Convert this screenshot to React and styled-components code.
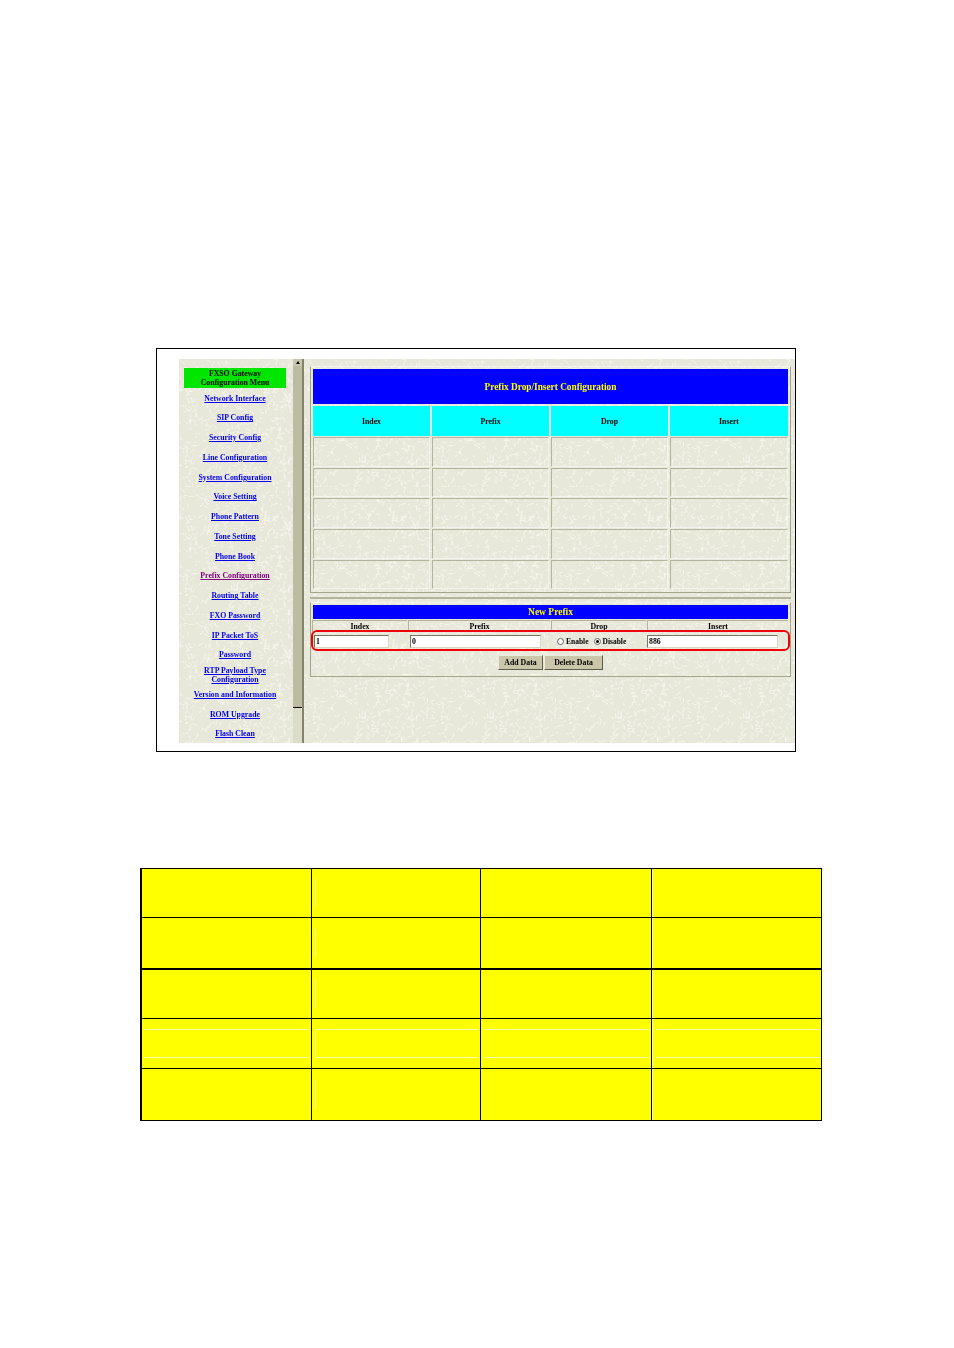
import styled, { createGlobalStyle } from "styled-components"

// little pale strokes like the old "white chocolate" tiled web background
const makeTexture = () => {
    let seed = 17
    const rnd = () => {
        seed = (seed * 16807) % 2147483647
        return seed / 2147483647
    }
    let lines = ""
    for (let i = 0; i < 640; i++) {
        const x = rnd() * 128
        const y = rnd() * 128
        const a = rnd() * Math.PI * 2
        const len = 2 + rnd() * 4
        lines += `<line x1='${x.toFixed(1)}' y1='${y.toFixed(1)}' x2='${(x + Math.cos(a) * len).toFixed(1)}' y2='${(y + Math.sin(a) * len).toFixed(1)}' stroke='#f6f6ed' stroke-width='0.9'/>`
    }
    const svg = `<svg xmlns='http://www.w3.org/2000/svg' width='128' height='128'>${lines}</svg>`
    return `url("data:image/svg+xml,${encodeURIComponent(svg)}")`
}

const texture = makeTexture()

const GlobalStyle = createGlobalStyle`
    html, body {
        margin: 0;
        background: #fff;
    }
    * {
        box-sizing: border-box;
    }
`

const Page = styled.div`
    width: 954px;
    height: 1348px;
    padding-top: 348px;
    font-family: "Liberation Serif", "Times New Roman", serif;
    font-size: 7.8px;
    font-weight: bold;
    color: #000;
`

const Frame = styled.div`
    width: 640px;
    height: 404px;
    margin-left: 156px;
    padding: 10px 0 8px 22px;
    border: 1px solid #000;
`

const Shot = styled.div`
    display: flex;
    width: 616px;
    height: 384px;
    background-color: #e7e7da;
    background-image: ${texture};
    filter: blur(0.25px);
`

const Sidebar = styled.nav`
    flex: none;
    width: 114px;
    padding: 9px 7px 0 5px;
`

const MenuTitle = styled.div`
    height: 20px;
    padding-top: 1px;
    background: #00e600;
    text-align: center;
    line-height: 9px;
`

const MenuList = styled.div`
    display: grid;
    grid-auto-rows: 19.76px;
    margin-top: 0.3px;
`

const MenuLink = styled.a`
    align-self: center;
    text-align: center;
    line-height: 9px;
    text-decoration: underline;
    color: ${props => (props.$visited ? "#800080" : "#0000ee")};
`

const Scrollbar = styled.div`
    flex: none;
    display: flex;
    flex-direction: column;
    width: 11px;
    background: #dcdccb;
    border-right: 2px solid #85836b;
`

const ScrollArrow = styled.div`
    display: flex;
    align-items: center;
    justify-content: center;
    height: 7px;
    background: #c9c7ae;
    &::before {
        content: "";
        border: 2px solid transparent;
        border-top: 0;
        border-bottom: 3px solid #000;
    }
`

const ScrollThumb = styled.div`
    height: 342px;
    background: #bdbba2;
    border-bottom: 1px solid #000;
`

const Content = styled.main`
    flex: 1;
    min-width: 0;
    padding: 7px 4px 0 6px;
`

const Panel = styled.section`
    display: flex;
    flex-direction: column;
    padding: 2px;
    height: ${props => props.$height}px;
    border: 1px solid;
    border-color: #f4f4ec #a5a48c #a5a48c #a5a48c;
`

const Banner = styled.h1`
    margin: 0;
    display: flex;
    align-items: center;
    justify-content: center;
    height: ${props => props.$height}px;
    background: #0000ff;
    color: #ffff00;
    font-size: ${props => props.$size}px;
    font-weight: bold;
`

const PrefixGrid = styled.div`
    display: grid;
    grid-template-columns: 117px 117px 117px 118px;
    grid-template-rows: 30px repeat(5, 29.7px);
    column-gap: 2px;
    row-gap: 1px;
    margin-top: 2px;
`

const ColumnHead = styled.div`
    display: flex;
    align-items: center;
    justify-content: center;
    background: #00ffff;
`

const EmptyCell = styled.div`
    border: 1px solid;
    border-color: #b4b39c #f4f4ec #f4f4ec #b4b39c;
`

const Divider = styled.hr`
    height: 2px;
    margin: 4px 0 3px;
    border: 0;
    background: #b4b39c;
`

const FieldHeads = styled.div`
    display: grid;
    grid-template-columns: 95px 142px 95px 1fr;
    gap: 1px;
    height: 10px;
    margin: 1px 0 0 -1px;
`

const FieldHead = styled.div`
    text-align: center;
    line-height: 11px;
    border-top: 1px solid #b4b39c;
    border-left: 1px solid #b4b39c;
`

const FieldRow = styled.div`
    display: grid;
    grid-template-columns: 96px 141px 96px 1fr;
    align-items: center;
    height: 21px;
    margin: 0 -2px;
    padding-top: 2px;
    border: 2px solid #f00000;
    border-radius: 6px;
`

const TextBox = styled.div`
    width: ${props => props.$width}px;
    height: 13px;
    margin-left: ${props => props.$left}px;
    padding-left: 1px;
    background: #fff;
    line-height: 11px;
    border: 1px solid;
    border-color: #77765f #d8d7c3 #d8d7c3 #77765f;
`

const RadioGroup = styled.div`
    display: flex;
    align-items: center;
    padding-left: 4px;
    font-size: 7.5px;
`

const Radio = styled.span`
    display: flex;
    align-items: center;
    justify-content: center;
    width: 7px;
    height: 7px;
    margin: 0 2px 0 ${props => props.$gap}px;
    background: #fff;
    border: 1px solid #6a695c;
    border-radius: 50%;
    &::after {
        content: "";
        display: ${props => (props.$on ? "block" : "none")};
        width: 3px;
        height: 3px;
        border-radius: 50%;
        background: #000;
    }
`

const Buttons = styled.div`
    display: flex;
    justify-content: center;
    gap: 1px;
    margin-top: 4px;
`

const Button = styled.div`
    display: flex;
    align-items: center;
    justify-content: center;
    width: ${props => props.$width}px;
    height: 15px;
    background: #c9c6a9;
    border: 1px solid;
    border-color: #eeeddd #5e5d4c #5e5d4c #eeeddd;
`

const YellowTable = styled.div`
    display: grid;
    grid-template-columns: 169px 168px 170px 169px;
    grid-template-rows: 49px 52px 49px 50px 51px;
    width: 682px;
    height: 253px;
    margin: 116px 0 0 140px;
    padding: 1px 1px 1px 2px;
    column-gap: 1px;
    background: #000;
`

const YellowCell = styled.div`
    display: flex;
    padding-top: ${props => props.$top}px;
    padding-left: ${props => props.$left}px;
    padding-right: ${props => props.$right}px;
    margin-bottom: ${props => props.$gap}px;
    background: #ffff00;
    border-left: ${props => (props.$edge ? "1px solid #fff" : "0")};
`

const FaintMark = styled.div`
    flex: 1;
    height: 29px;
    border-style: solid;
    border-color: #ffffb0;
    border-width: ${props => (props.$box ? "1px 0" : "0")};
    border-left-width: ${props => (props.$side ? "1px" : "0")};
`

const menu = [
    "Network Interface",
    "SIP Config",
    "Security Config",
    "Line Configuration",
    "System Configuration",
    "Voice Setting",
    "Phone Pattern",
    "Tone Setting",
    "Phone Book",
    "Prefix Configuration",
    "Routing Table",
    "FXO Password",
    "IP Packet ToS",
    "Password",
    "RTP Payload Type Configuration",
    "Version and Information",
    "ROM Upgrade",
    "Flash Clean",
]

const columns = ["Index", "Prefix", "Drop", "Insert"]

// gap under each row is the black rule; the second row's rule is thicker
const yellowRows = [
    { top: 9, gap: 1 },
    { top: 11, gap: 2 },
    { top: 9, gap: 1 },
    { top: 10, gap: 1, box: true },
    { top: 11, gap: 0 },
]

const App = () => {
    return (
        <Page>
            <GlobalStyle />
            <Frame>
                <Shot>
                    <Sidebar>
                        <MenuTitle>FXSO Gateway<br />Configuration Menu</MenuTitle>
                        <MenuList>
                            {menu.map(item => (
                                <MenuLink key={item} $visited={item === "Prefix Configuration"}>
                                    {item === "RTP Payload Type Configuration"
                                        ? <>RTP Payload Type<br />Configuration</>
                                        : item}
                                </MenuLink>
                            ))}
                        </MenuList>
                    </Sidebar>
                    <Scrollbar>
                        <ScrollArrow />
                        <ScrollThumb />
                    </Scrollbar>
                    <Content>
                        <Panel $height={227}>
                            <Banner $height={35} $size={9.3}>Prefix Drop/Insert Configuration</Banner>
                            <PrefixGrid>
                                {columns.map(name => <ColumnHead key={name}>{name}</ColumnHead>)}
                                {Array.from({ length: 20 }, (_, i) => <EmptyCell key={i} />)}
                            </PrefixGrid>
                        </Panel>
                        <Divider />
                        <Panel $height={75}>
                            <Banner $height={14} $size={9.5}>New Prefix</Banner>
                            <FieldHeads>
                                {columns.map(name => <FieldHead key={name}>{name}</FieldHead>)}
                            </FieldHeads>
                            <FieldRow>
                                <TextBox $width={75} $left={1}>1</TextBox>
                                <TextBox $width={131} $left={1}>0</TextBox>
                                <RadioGroup>
                                    <Radio $gap={3} />Enable
                                    <Radio $gap={5} $on />Disable
                                </RadioGroup>
                                <TextBox $width={131} $left={1}>886</TextBox>
                            </FieldRow>
                            <Buttons>
                                <Button $width={45}>Add Data</Button>
                                <Button $width={59}>Delete Data</Button>
                            </Buttons>
                        </Panel>
                    </Content>
                </Shot>
            </Frame>
            <YellowTable>
                {yellowRows.map((row, r) => [0, 1, 2, 3].map(c => (
                    <YellowCell
                        key={`${r}-${c}`}
                        $top={row.box || c === 1 ? row.top : 0}
                        $left={c === 1 ? 3 : row.box ? 3 : 0}
                        $right={row.box ? 2 : 0}
                        $gap={row.gap}
                        $edge={c === 3}
                    >
                        {(row.box || c === 1) && <FaintMark $box={row.box} $side={c === 1} />}
                    </YellowCell>
                )))}
            </YellowTable>
        </Page>
    )
}

export default App
